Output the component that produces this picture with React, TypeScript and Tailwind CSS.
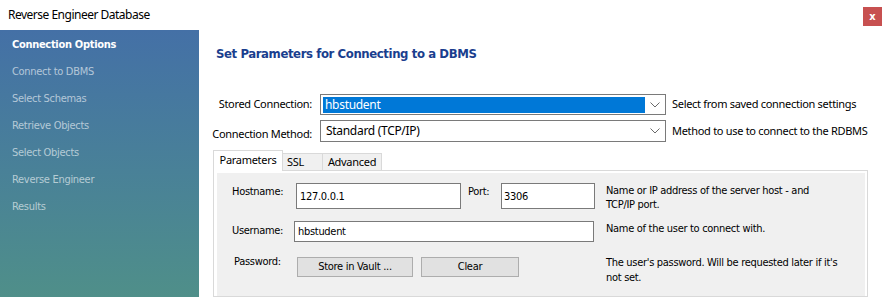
import React from "react";

const seg = { fontFamily: '"Noto Sans", "Liberation Sans", sans-serif' };
const tah = { fontFamily: '"DejaVu Sans Condensed", "DejaVu Sans", sans-serif', fontStretch: "condensed" as const };

function Chevron() {
  return (
    <svg width="10" height="6" viewBox="0 0 10 6" className="block">
      <polyline points="0.5,0.5 5,5 9.5,0.5" fill="none" stroke="#6a6a6a" strokeWidth="1" />
    </svg>
  );
}

const steps = [
  "Connection Options",
  "Connect to DBMS",
  "Select Schemas",
  "Retrieve Objects",
  "Select Objects",
  "Reverse Engineer",
  "Results",
];

export default function App() {
  return (
    <div className="w-[883px] h-[297px] bg-white flex flex-col overflow-hidden">
      <div className="h-[30px] flex items-start justify-between shrink-0">
        <div className="pl-[8px] pt-[7px] text-[12px] leading-[16px] tracking-[-0.5px] text-black" style={seg}>
          Reverse Engineer Database
        </div>
        <div className="mt-[7px] mr-[1px] w-[19px] h-[19px] bg-[#c75050] flex items-center justify-center text-white text-[11px] font-bold leading-none" style={tah}>
          x
        </div>
      </div>
      <div className="flex flex-1 min-h-0">
        <div className="w-[199px] shrink-0 bg-gradient-to-b from-[#4470a6] to-[#4f8f89] flex flex-col pt-[2px]">
          {steps.map((s, i) => (
            <div
              key={s}
              className={`h-[27px] flex items-center pl-[12px] text-[11px] tracking-[-0.3px] ${i === 0 ? "font-bold text-white" : "text-white/60"}`}
              style={tah}
            >
              {s}
            </div>
          ))}
        </div>
        <div className="flex-1 flex flex-col pl-[14px] pt-[16px]">
          <div className="ml-[3px] text-[13px] leading-[16px] font-bold text-[#1a3e8e] tracking-[-0.4px]" style={tah}>
            Set Parameters for Connecting to a DBMS
          </div>
          <div className="mt-[32px] flex items-center text-[11px] tracking-[-0.3px] text-black whitespace-nowrap" style={seg}>
            <div className="w-[99px] flex justify-end">Stored Connection:</div>
            <div className="ml-[8px] w-[346px] h-[21px] border border-[#7a7a7a] bg-white flex items-center pl-[2px] pr-[5px]">
              <div className="w-[322px] h-[16px] bg-[#0078d7] text-white flex items-center pl-[2px] text-[12px]">hbstudent</div>
              <div className="flex-1 flex justify-end">
                <Chevron />
              </div>
            </div>
            <div className="ml-[6px]">Select from saved connection settings</div>
          </div>
          <div className="mt-[5px] h-[22px] flex items-center text-[11px] tracking-[-0.3px] text-black whitespace-nowrap" style={seg}>
            <div className="w-[99px] flex justify-end pt-[6px]">Connection Method:</div>
            <div className="ml-[8px] w-[346px] h-[22px] border border-[#7a7a7a] bg-white flex items-center pl-[5px] pr-[5px]">
              <div className="text-[12px]">Standard (TCP/IP)</div>
              <div className="flex-1 flex justify-end">
                <Chevron />
              </div>
            </div>
            <div className="ml-[6px]">Method to use to connect to the RDBMS</div>
          </div>
          <div className="mt-[8px] h-[20px] flex items-end text-[11px] tracking-[-0.3px] text-black" style={seg}>
            <div className="w-[70px] h-[21px] border border-b-0 border-[#d9d9d9] bg-white flex items-center justify-center relative top-[1px] pb-[2px]">
              Parameters
            </div>
            <div className="w-[40px] h-[17px] border border-l-0 border-b-0 border-[#d9d9d9] bg-[#f0f0f0] flex items-center pl-[4px]">SSL</div>
            <div className="w-[59px] h-[17px] border border-l-0 border-b-0 border-[#d9d9d9] bg-[#f0f0f0] flex items-center justify-center">Advanced</div>
          </div>
          <div className="w-[655px] flex-1 border border-[#d9d9d9] bg-white pt-[2px] pl-[3px] pr-[2px]">
            <div className="h-full bg-[#f0f0f0] pl-[15px] pt-[10px] text-[11px] tracking-[-0.3px] text-black" style={tah}>
              <div className="flex h-[26px]">
                <div className="w-[374px] flex shrink-0">
                  <div className="w-[64px] pt-[1px]">Hostname:</div>
                  <div className="w-[165px] h-[26px] border border-[#7a7a7a] bg-white pl-[3px] pt-[5px]">127.0.0.1</div>
                  <div className="ml-[7px] w-[33px] pt-[1px]">Port:</div>
                  <div className="w-[94px] h-[26px] border border-[#7a7a7a] bg-white pl-[2px] pt-[5px]">3306</div>
                </div>
                <div className="leading-[14px] pt-[1px]">
                  Name or IP address of the server host - and
                  <br />
                  TCP/IP port.
                </div>
              </div>
              <div className="flex h-[21px] mt-[12px]">
                <div className="w-[374px] flex shrink-0">
                  <div className="w-[62px] pt-[2px]">Username:</div>
                  <div className="w-[300px] h-[21px] border border-[#7a7a7a] bg-white pl-[3px] pt-[2px]">hbstudent</div>
                </div>
                <div className="leading-[13px] pt-[1px]">Name of the user to connect with.</div>
              </div>
              <div className="flex h-[20px] mt-[15px]">
                <div className="w-[374px] flex shrink-0">
                  <div className="w-[65px] pl-[2px] -mt-[3px]">Password:</div>
                  <div className="w-[116px] h-[20px] border border-[#adadad] bg-[#e1e1e1] flex items-center justify-center">Store in Vault ...</div>
                  <div className="ml-[8px] w-[98px] h-[20px] border border-[#adadad] bg-[#e1e1e1] flex items-center justify-center">Clear</div>
                </div>
                <div className="leading-[15px] -mt-[2px]">
                  The user&apos;s password. Will be requested later if it&apos;s
                  <br />
                  not set.
                </div>
              </div>
            </div>
          </div>
        </div>
      </div>
    </div>
  );
}
